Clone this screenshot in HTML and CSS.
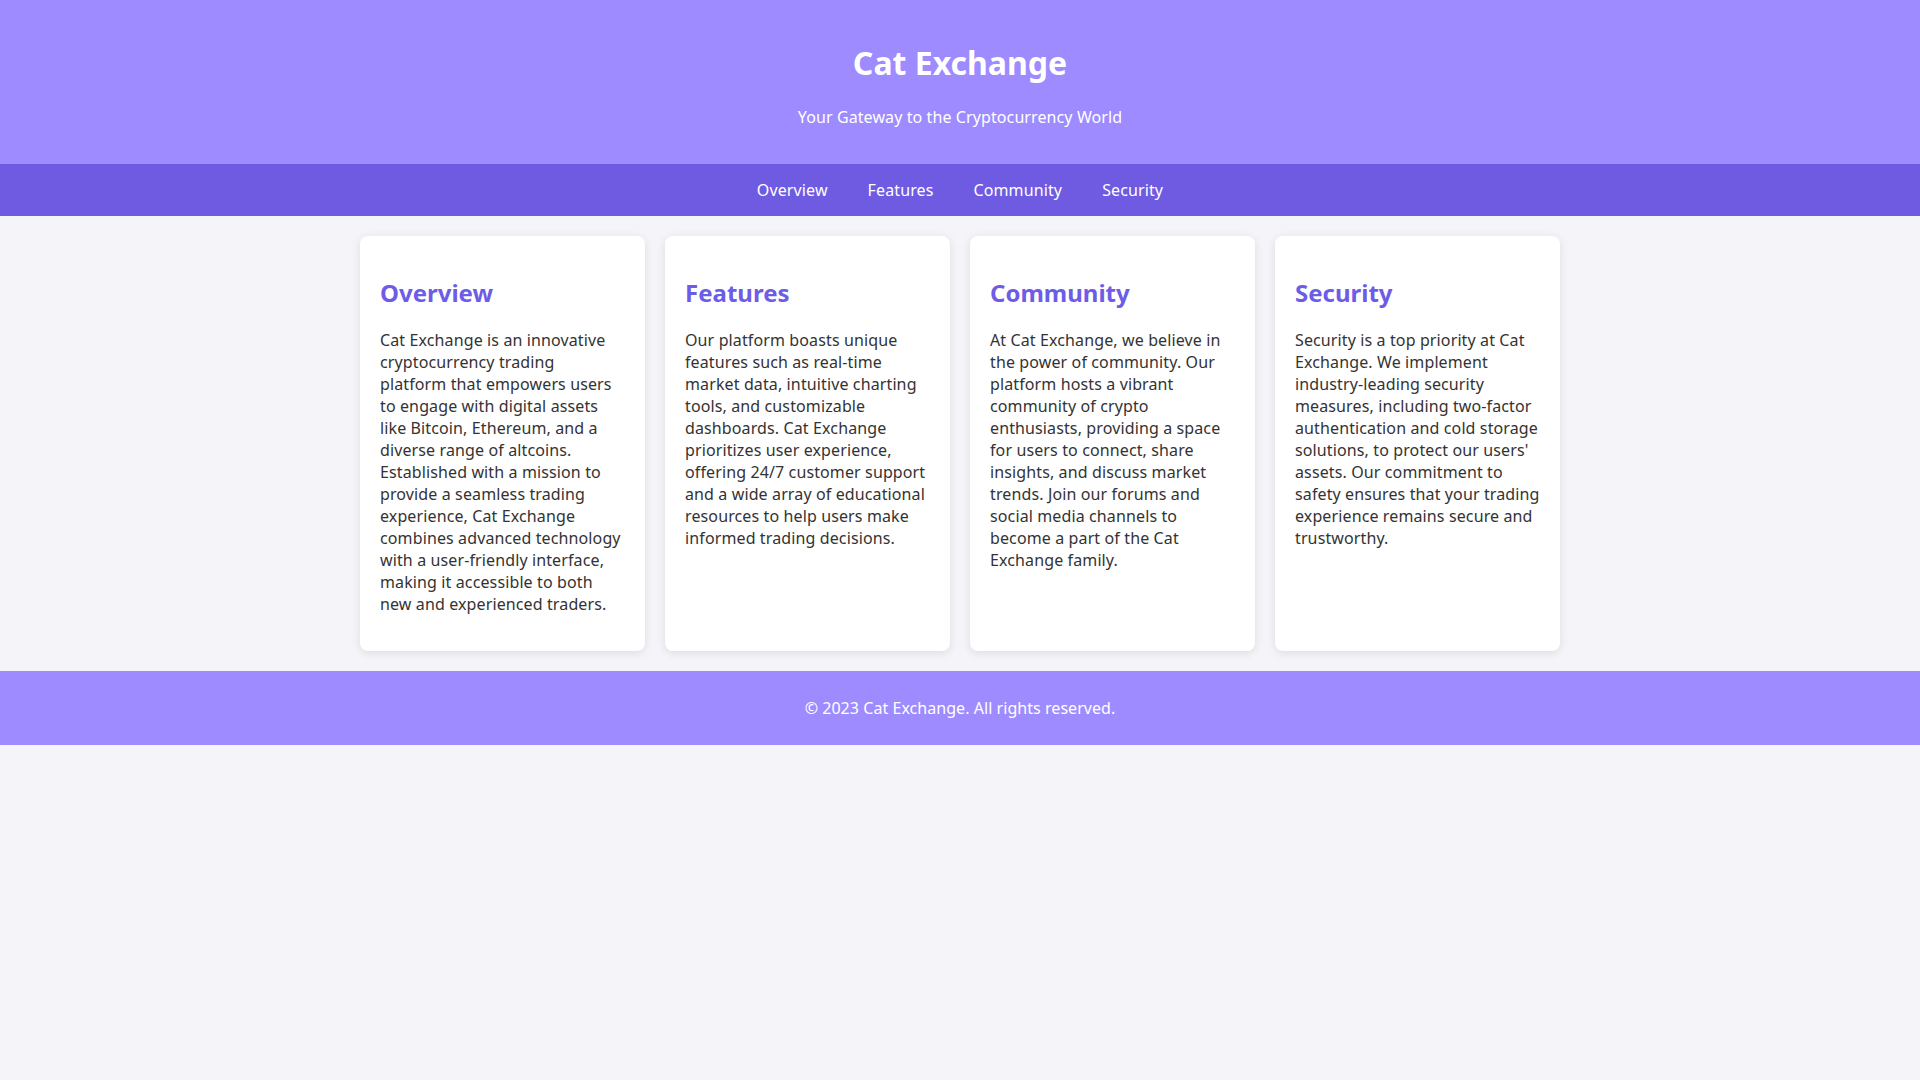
FILE: index.html
```html
<!DOCTYPE html>
<html lang="en">
<head>
<meta charset="utf-8">
<title>Cat Exchange</title>
<link rel="stylesheet" href="styles.css">
</head>
<body>
<header class="site-header">
  <h1 class="site-title">Cat Exchange</h1>
  <p class="site-tagline">Your Gateway to the Cryptocurrency World</p>
</header>
<nav class="site-nav">
  <ul class="nav-list">
    <li><a href="#overview">Overview</a></li>
    <li><a href="#features">Features</a></li>
    <li><a href="#community">Community</a></li>
    <li><a href="#security">Security</a></li>
  </ul>
</nav>
<main class="content">
  <section class="card" id="overview">
    <h2>Overview</h2>
    <p>Cat Exchange is an innovative cryptocurrency trading platform that empowers users to engage with digital assets like Bitcoin, Ethereum, and a diverse range of altcoins. Established with a mission to provide a seamless trading experience, Cat Exchange combines advanced technology with a user-friendly interface, making it accessible to both new and experienced traders.</p>
  </section>
  <section class="card" id="features">
    <h2>Features</h2>
    <p>Our platform boasts unique features such as real-time market data, intuitive charting tools, and customizable dashboards. Cat Exchange prioritizes user experience, offering 24/7 customer support and a wide array of educational resources to help users make informed trading decisions.</p>
  </section>
  <section class="card" id="community">
    <h2>Community</h2>
    <p>At Cat Exchange, we believe in the power of community. Our platform hosts a vibrant community of crypto enthusiasts, providing a space for users to connect, share insights, and discuss market trends. Join our forums and social media channels to become a part of the Cat Exchange family.</p>
  </section>
  <section class="card" id="security">
    <h2>Security</h2>
    <p>Security is a top priority at Cat Exchange. We implement industry-leading security measures, including two-factor authentication and cold storage solutions, to protect our users' assets. Our commitment to safety ensures that your trading experience remains secure and trustworthy.</p>
  </section>
</main>
<footer class="site-footer">
  <p>&copy; 2023 Cat Exchange. All rights reserved.</p>
</footer>
</body>
</html>
```

FILE: styles.css
```css
* { box-sizing: border-box; }

body {
  margin: 0;
  font-family: "Noto Sans", "Open Sans", sans-serif;
  background: #f4f4f9;
  color: #333;
}

.site-header {
  background: #9d8bff;
  color: #fff;
  text-align: center;
  padding: 20px;
}

.site-title {
  font-size: 32px;
  font-weight: 700;
  margin: 21.44px 0;
}

.site-tagline {
  font-size: 16px;
  margin: 16px 0;
  letter-spacing: 0.1px;
}

.site-nav {
  background: #6f5ae2;
  padding: 15px 0;
}

.nav-list {
  list-style: none;
  margin: 0;
  padding: 0;
  display: flex;
  justify-content: center;
}

.nav-list li {
  margin: 0 20px;
}

.nav-list a {
  color: #fff;
  text-decoration: none;
  font-size: 16px;
  letter-spacing: 0.12px;
}

.content {
  max-width: 1200px;
  margin: 0 auto;
  padding: 20px 0;
  display: grid;
  grid-template-columns: repeat(4, 1fr);
  gap: 20px;
}

.card {
  background: #fff;
  border-radius: 8px;
  box-shadow: 0 2px 10px rgba(0, 0, 0, 0.1);
  padding: 20px;
}

.card h2 {
  color: #6c5ce7;
  font-size: 24px;
  font-weight: 700;
  margin: 19.92px 0;
}

.card p {
  font-size: 16px;
  margin: 16px 0;
  letter-spacing: 0.12px;
}

.site-footer {
  background: #9d8bff;
  color: #fff;
  text-align: center;
  padding: 10px;
}

.site-footer p {
  margin: 16px 0;
  font-size: 16px;
  letter-spacing: 0.05px;
}
```
